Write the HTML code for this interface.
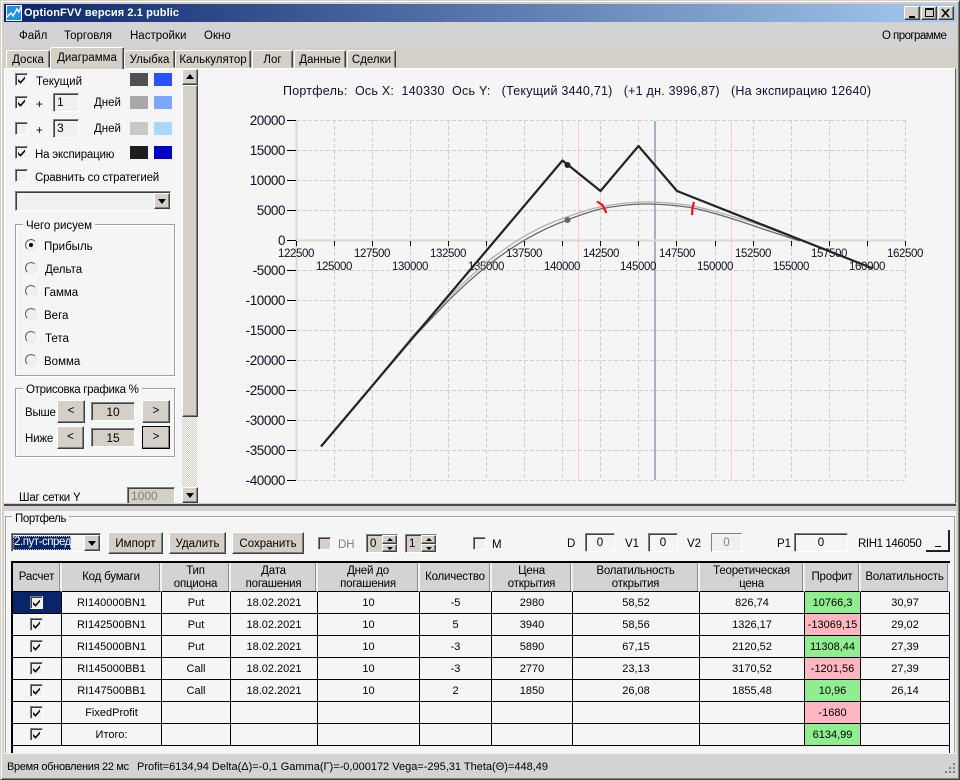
<!DOCTYPE html>
<html><head><meta charset="utf-8"><style>
html,body{margin:0;padding:0;width:960px;height:780px;overflow:hidden;background:#d4d0c8}
body{position:relative;font:11.5px/13px "Liberation Sans",sans-serif;color:#000}
.a{position:absolute;box-sizing:border-box}
.t{position:absolute;white-space:nowrap;line-height:13px}
.up{position:absolute;box-sizing:border-box;background:#d4d0c8;border:1px solid;border-color:#fff #404040 #404040 #fff;box-shadow:inset -1px -1px #808080;text-align:center}
.dn{position:absolute;box-sizing:border-box;border:1px solid;border-color:#808080 #fff #fff #808080;box-shadow:inset 1px 1px #404040;text-align:center}
.cb{position:absolute;box-sizing:border-box;width:13px;height:13px;background:#f0f0f0;border:1px solid;border-color:#808080 #fff #fff #808080;box-shadow:inset 1px 1px #404040}
.cb svg{position:absolute;left:0;top:0}
.tab{position:absolute;box-sizing:border-box;top:50px;height:18px;background:#d4d0c8;border:1px solid;border-color:#fff #404040 transparent #fff;border-radius:2px 2px 0 0;text-align:center;padding-top:3px;box-shadow:inset -1px 0 #808080}
.sw{position:absolute;width:18px;height:13px}
.rd{position:absolute;box-sizing:border-box;left:25px;width:12px;height:12px;border-radius:50%;background:#f0f0f0;border:1px solid;border-color:#606060 #e8e8e8 #e8e8e8 #606060}
.grp{position:absolute;box-sizing:border-box;border:1px solid #a0a0a0;box-shadow:1px 1px #fff,inset 1px 1px #fff}
.lg{position:absolute;background:#f5f5f5;padding:0 3px;white-space:nowrap;line-height:13px}
.ar{position:absolute;width:0;height:0;border-left:4px solid transparent;border-right:4px solid transparent}
table{position:absolute;left:13px;top:563px;border-collapse:separate;border-spacing:0;table-layout:fixed;width:937px;font:11px/13px "Liberation Sans",sans-serif}
th{font-weight:normal;font-size:11.5px;letter-spacing:-.2px;background:#d3d3d3;height:29px;box-sizing:border-box;padding:1px 0 0;border-right:2px solid #f2f2f2;border-bottom:1px solid #000;box-shadow:inset -1px 0 #909090;text-align:center}
td{height:22px;box-sizing:border-box;padding:1px 0 0;border-right:1px solid #000;border-bottom:1px solid #000;text-align:center;background:#f5f5f5;position:relative}
td .cb{left:17px;top:4px}
.g{background:#90ee90}.p{background:#ffb6c1}
</style></head><body>
<svg width="0" height="0" style="position:absolute"><defs><path id="ck" d="M2 5 L4.5 7.5 L9 2.5 L9 4.8 L4.5 9.8 L2 7.3Z" fill="#000"/></defs></svg>

<!-- window frame -->
<div class="a" style="left:0;top:0;width:960px;height:780px;border:1px solid;border-color:#d4d0c8 #404040 #404040 #d4d0c8;box-shadow:inset 1px 1px #fff,inset -1px -1px #808080"></div>
<div class="a" style="left:4px;top:4px;width:952px;height:18px;background:linear-gradient(90deg,#0a246a,#a6caf0)"></div>
<svg class="a" style="left:6px;top:5px" width="16" height="16"><rect width="16" height="16" fill="#fff"/><rect x="1" y="1" width="14" height="14" fill="#1e90e8"/><path d="M1 12 L5 8 L7 11 L11 4 L13 7 L15 2" stroke="#fff" stroke-width="1.4" fill="none"/></svg>
<div class="t" style="left:24px;top:7px;color:#fff;font-weight:bold;font-size:11px;letter-spacing:.1px">OptionFVV версия 2.1 public</div>
<div class="up" style="left:904px;top:6px;width:16px;height:14px"><div class="a" style="left:4px;top:9px;width:6px;height:2px;background:#000"></div></div>
<div class="up" style="left:921px;top:6px;width:16px;height:14px"><div class="a" style="left:3px;top:1px;width:9px;height:9px;border:1px solid #000;border-top-width:2px"></div></div>
<div class="up" style="left:938px;top:6px;width:16px;height:14px"><svg class="a" style="left:2px;top:1px" width="10" height="10"><path d="M1 1 L8 9 M8 1 L1 9" stroke="#000" stroke-width="1.6"/></svg></div>

<!-- menu -->
<div class="a" style="left:4px;top:22px;width:952px;height:25px;background:#d3d3d3"></div>
<div class="t" style="left:19px;top:30px">Файл</div>
<div class="t" style="left:64px;top:30px">Торговля</div>
<div class="t" style="left:130px;top:30px">Настройки</div>
<div class="t" style="left:204px;top:30px">Окно</div>
<div class="t" style="left:882px;top:30px;letter-spacing:-.55px">О программе</div>

<!-- tabs -->
<div class="tab" style="left:6px;width:44px">Доска</div>
<div class="tab" style="left:124px;width:51px">Улыбка</div>
<div class="tab" style="left:175px;width:76px">Калькулятор</div>
<div class="tab" style="left:252px;width:41px">Лог</div>
<div class="tab" style="left:294px;width:52px">Данные</div>
<div class="tab" style="left:347px;width:49px">Сделки</div>

<!-- main panel -->
<div class="a" style="left:4px;top:68px;width:952px;height:437px;background:#f5f5f5;border-top:1px solid #fff;border-left:1px solid #fff;border-right:1px solid #606060"></div>
<div class="tab" style="left:50px;top:47px;width:74px;height:22px;border-bottom:0;padding-top:4px;z-index:2">Диаграмма</div>

<!-- sidebar -->
<div class="cb" style="left:15px;top:73px"><svg width="11" height="11"><use href="#ck"/></svg></div>
<div class="t" style="left:36px;top:76px">Текущий</div>
<div class="sw" style="left:130px;top:73px;background:#505050"></div>
<div class="sw" style="left:154px;top:73px;background:#2a50ff"></div>

<div class="cb" style="left:15px;top:96px"><svg width="11" height="11"><use href="#ck"/></svg></div>
<div class="t" style="left:36px;top:99px">+</div>
<div class="dn" style="left:53px;top:93px;width:26px;height:19px;background:#f0f0f0;text-align:left;padding:2px 0 0 3px;font-size:12px">1</div>
<div class="t" style="left:94px;top:97px">Дней</div>
<div class="sw" style="left:130px;top:96px;background:#a8a8a8"></div>
<div class="sw" style="left:154px;top:96px;background:#7ba7ff"></div>

<div class="cb" style="left:15px;top:122px"></div>
<div class="t" style="left:36px;top:125px">+</div>
<div class="dn" style="left:53px;top:119px;width:26px;height:19px;background:#f0f0f0;text-align:left;padding:2px 0 0 3px;font-size:12px">3</div>
<div class="t" style="left:94px;top:123px">Дней</div>
<div class="sw" style="left:130px;top:122px;background:#c8c8c8"></div>
<div class="sw" style="left:154px;top:122px;background:#a8d8ff"></div>

<div class="cb" style="left:15px;top:146px"><svg width="11" height="11"><use href="#ck"/></svg></div>
<div class="t" style="left:35px;top:149px;letter-spacing:-.2px">На экспирацию</div>
<div class="sw" style="left:130px;top:146px;background:#1e1e1e"></div>
<div class="sw" style="left:154px;top:146px;background:#0000c8"></div>

<div class="cb" style="left:15px;top:169px"></div>
<div class="t" style="left:35px;top:172px;letter-spacing:-.2px">Сравнить со стратегией</div>

<div class="dn" style="left:15px;top:191px;width:156px;height:20px;background:#f0f0f0"></div>
<div class="up" style="left:154px;top:193px;width:16px;height:16px"><div class="ar" style="left:3px;top:5px;border-top:5px solid #000"></div></div>

<div class="grp" style="left:15px;top:224px;width:160px;height:152px"></div>
<div class="lg" style="left:23px;top:220px">Чего рисуем</div>
<div class="rd" style="top:239px"><div class="a" style="left:3px;top:3px;width:4px;height:4px;border-radius:50%;background:#000"></div></div>
<div class="t" style="left:44px;top:241px">Прибыль</div>
<div class="rd" style="top:262px"></div><div class="t" style="left:45px;top:264px">Дельта</div>
<div class="rd" style="top:285px"></div><div class="t" style="left:44px;top:287px">Гамма</div>
<div class="rd" style="top:308px"></div><div class="t" style="left:44px;top:310px">Вега</div>
<div class="rd" style="top:331px"></div><div class="t" style="left:45px;top:333px">Тета</div>
<div class="rd" style="top:354px"></div><div class="t" style="left:44px;top:356px">Вомма</div>

<div class="grp" style="left:15px;top:388px;width:160px;height:69px"></div>
<div class="lg" style="left:23px;top:384px;letter-spacing:-.3px">Отрисовка графика %</div>
<div class="t" style="left:25px;top:407px;letter-spacing:-.2px">Выше</div>
<div class="up" style="left:57px;top:400px;width:28px;height:23px;padding-top:4px">&lt;</div>
<div class="dn" style="left:91px;top:402px;width:44px;height:19px;background:#d4d0c8;padding-top:3px;font-size:12px">10</div>
<div class="up" style="left:142px;top:400px;width:28px;height:23px;padding-top:4px">&gt;</div>
<div class="t" style="left:25px;top:433px;letter-spacing:-.2px">Ниже</div>
<div class="up" style="left:57px;top:426px;width:27px;height:23px;padding-top:4px">&lt;</div>
<div class="dn" style="left:91px;top:428px;width:44px;height:19px;background:#d4d0c8;padding-top:3px;font-size:12px">15</div>
<div class="up" style="left:142px;top:426px;width:28px;height:23px;padding-top:4px;outline:1px solid #000;outline-offset:-1px">&gt;</div>

<div class="t" style="left:19px;top:492px;letter-spacing:-.2px">Шаг сетки Y</div>
<div class="dn" style="left:127px;top:487px;width:48px;height:17px;background:#d4d0c8;color:#808080;text-align:left;padding:2px 0 0 3px;font-size:12px;border-bottom:0">1000</div>

<!-- sidebar scrollbar -->
<div class="a" style="left:182px;top:416px;width:15px;height:71px;background:repeating-conic-gradient(#d4d0c8 0 25%,#f5f5f5 0 50%) 0 0/2px 2px"></div>
<div class="up" style="left:182px;top:69px;width:16px;height:16px"><div class="ar" style="left:3px;top:4px;border-bottom:5px solid #000"></div></div>
<div class="up" style="left:182px;top:85px;width:16px;height:332px"></div>
<div class="up" style="left:182px;top:487px;width:16px;height:16px"><div class="ar" style="left:3px;top:5px;border-top:5px solid #000"></div></div>

<!-- chart -->
<svg class="a" style="left:198px;top:69px;background:#f5f5f5" width="757" height="435" viewBox="198 69 757 435" font-family="Liberation Sans, sans-serif">
<text x="283" y="95" font-size="12.5" fill="#101030" textLength="588" lengthAdjust="spacing" xml:space="preserve">Портфель:  Ось X:  140330  Ось Y:   (Текущий 3440,71)   (+1 дн. 3996,87)   (На экспирацию 12640)</text>
<g stroke="#cecece" stroke-dasharray="4 2" fill="none">
<path d="M296 120.5H905M296 150.5H905M296 180.5H905M296 210.5H905M296 270.5H905M296 300.5H905M296 330.5H905M296 360.5H905M296 390.5H905M296 420.5H905M296 450.5H905M296 480.5H905"/>
<path d="M334.5 120V480M372.5 120V480M410.5 120V480M448.5 120V480M486.5 120V480M524.5 120V480M562.5 120V480M600.5 120V480M638.5 120V480M676.5 120V480M715.5 120V480M753.5 120V480M791.5 120V480M829.5 120V480M867.5 120V480M905.5 120V480"/>
</g>
<path d="M578.5 121V480M731.5 121V480" stroke="#ffc8d0"/>
<path d="M655 121V480" stroke="#a4b0c4" stroke-width="2"/>
<path d="M296.5 120V481" stroke="#d8d8d8" stroke-width="2"/>
<path d="M296 240.5H905" stroke="#d8d8d8" stroke-width="2"/>
<g stroke="#000">
<path d="M287 120.5H296M287 150.5H296M287 180.5H296M287 210.5H296M287 240.5H296M287 270.5H296M287 300.5H296M287 330.5H296M287 360.5H296M287 390.5H296M287 420.5H296M287 450.5H296M287 480.5H296"/>
<path d="M296.5 241V246M334.5 241V246M372.5 241V246M410.5 241V246M448.5 241V246M486.5 241V246M524.5 241V246M562.5 241V246M600.5 241V246M638.5 241V246M676.5 241V246M715.5 241V246M753.5 241V246M791.5 241V246M829.5 241V246M867.5 241V246M905.5 241V246"/>
</g>
<g font-size="13.5" letter-spacing="-.45" text-anchor="end" fill="#101020">
<text x="285" y="125">20000</text><text x="285" y="155">15000</text><text x="285" y="185">10000</text><text x="285" y="215">5000</text><text x="285" y="245">0</text><text x="285" y="275">-5000</text><text x="285" y="305">-10000</text><text x="285" y="335">-15000</text><text x="285" y="365">-20000</text><text x="285" y="395">-25000</text><text x="285" y="425">-30000</text><text x="285" y="455">-35000</text><text x="285" y="485">-40000</text>
</g>
<g font-size="11.5" letter-spacing="-.4" text-anchor="middle" fill="#101020">
<text x="296" y="257">122500</text><text x="372" y="257">127500</text><text x="448" y="257">132500</text><text x="524" y="257">137500</text><text x="601" y="257">142500</text><text x="677" y="257">147500</text><text x="753" y="257">152500</text><text x="829" y="257">157500</text><text x="905" y="257">162500</text>
<text x="334" y="270">125000</text><text x="410" y="270">130000</text><text x="486" y="270">135000</text><text x="562" y="270">140000</text><text x="638" y="270">145000</text><text x="715" y="270">150000</text><text x="791" y="270">155000</text><text x="867" y="270">160000</text>
</g>
<g fill="none" stroke-linejoin="round">
<path d="M370 388 L410 339 L448 298 Q467 279 487 262 Q505 248 523 237 Q545 224 567 217 Q585 210 600 207 Q625 202 645 202 Q670 202 693 206 Q720 212 760 225 L800 240" stroke="#b0b0b0" stroke-width="1.3"/>
<path d="M370 388 L410 341 L448 301 Q467 282 487 266 Q505 252 523 241 Q545 228 567 220 Q585 213 600 209 Q625 204 645 204 Q670 204 693 208 Q720 214 760 228 L800 241" stroke="#666" stroke-width="1.3"/>
<path d="M321 446.5 L562.5 160.5 L600.5 191 L638.5 146 L677 191 L873 268.5" stroke="#222" stroke-width="2.2"/>
</g>
<circle cx="567.5" cy="165" r="3" fill="#222"/>
<circle cx="567.5" cy="220" r="3" fill="#666"/>
<path d="M597 201.5 L602.5 205 L606.5 213" stroke="#f01010" stroke-width="2.2" fill="none"/>
<path d="M694 202 L692.5 208 L692 215" stroke="#f01010" stroke-width="2.2" fill="none"/>
</svg>

<!-- splitter -->
<div class="a" style="left:4px;top:503px;width:952px;height:1px;background:#d4d0c8"></div>
<div class="a" style="left:4px;top:504px;width:952px;height:2px;background:#484848"></div>
<div class="a" style="left:4px;top:506px;width:952px;height:5px;background:#d3d3d3"></div>

<!-- bottom panel -->
<div class="a" style="left:4px;top:511px;width:952px;height:242px;background:#f5f5f5"></div>
<div class="a" style="left:5px;top:516px;width:950px;height:240px;border:1px solid #a0a0a0;border-bottom:0;box-shadow:inset 1px 1px #fff"></div>
<div class="lg" style="left:12px;top:513px;letter-spacing:-.4px">Портфель</div>

<div class="dn" style="left:11px;top:533px;width:90px;height:19px;background:#f5f5f5"></div>
<div class="a" style="left:13px;top:536px;width:58px;height:14px;background:#0a246a;color:#fff;padding-left:1px;white-space:nowrap;letter-spacing:-.45px;outline:1px dotted #c0c0c0;outline-offset:-1px">2.пут-спред</div>
<div class="up" style="left:84px;top:535px;width:16px;height:16px"><div class="ar" style="left:3px;top:5px;border-top:5px solid #000"></div></div>

<div class="up" style="left:108px;top:532px;width:55px;height:22px;padding-top:5px">Импорт</div>
<div class="up" style="left:169px;top:532px;width:57px;height:22px;padding-top:5px">Удалить</div>
<div class="up" style="left:232px;top:532px;width:72px;height:22px;padding-top:5px">Сохранить</div>

<div class="cb" style="left:318px;top:537px;background:#d4d0c8"></div>
<div class="t" style="left:338px;top:539px;color:#808080">DH</div>
<div class="dn" style="left:366px;top:534px;width:32px;height:19px;background:#d4d0c8;text-align:left;padding:3px 0 0 3px">0</div>
<div class="up" style="left:382px;top:535px;width:15px;height:9px"><div class="ar" style="left:4px;top:2px;border-left-width:3px;border-right-width:3px;border-bottom:3px solid #000"></div></div>
<div class="up" style="left:382px;top:544px;width:15px;height:8px"><div class="ar" style="left:4px;top:2px;border-left-width:3px;border-right-width:3px;border-top:3px solid #000"></div></div>
<div class="dn" style="left:405px;top:534px;width:32px;height:19px;background:#d4d0c8;text-align:left;padding:3px 0 0 3px">1</div>
<div class="up" style="left:421px;top:535px;width:15px;height:9px"><div class="ar" style="left:4px;top:2px;border-left-width:3px;border-right-width:3px;border-bottom:3px solid #000"></div></div>
<div class="up" style="left:421px;top:544px;width:15px;height:8px"><div class="ar" style="left:4px;top:2px;border-left-width:3px;border-right-width:3px;border-top:3px solid #000"></div></div>
<div class="cb" style="left:473px;top:537px"></div>
<div class="t" style="left:492px;top:539px">M</div>
<div class="t" style="left:567px;top:538px">D</div>
<div class="dn" style="left:585px;top:533px;width:30px;height:19px;background:#f5f5f5;padding-top:3px">0</div>
<div class="t" style="left:625px;top:538px">V1</div>
<div class="dn" style="left:648px;top:533px;width:30px;height:19px;background:#f5f5f5;padding-top:3px">0</div>
<div class="t" style="left:687px;top:538px">V2</div>
<div class="dn" style="left:711px;top:533px;width:31px;height:19px;background:#f0f0f0;padding-top:3px;color:#808080;box-shadow:none">0</div>
<div class="t" style="left:777px;top:538px">P1</div>
<div class="dn" style="left:794px;top:533px;width:54px;height:19px;background:#f5f5f5;padding-top:3px">0</div>
<div class="t" style="left:858px;top:538px;letter-spacing:-.4px">RIH1 146050</div>
<div class="a" style="left:926px;top:530px;width:24px;height:22px;background:#f5f5f5;border-right:2px solid #202020;border-bottom:2px solid #202020"></div>
<div class="a" style="left:935px;top:546px;width:6px;height:1px;background:#000"></div>

<!-- grid -->
<div class="a" style="left:11px;top:561px;width:939px;height:192px;border:2px solid #000;border-left-width:2px;border-right-width:1px;border-bottom:0"></div>
<table><colgroup><col style="width:49px"><col style="width:100px"><col style="width:69px"><col style="width:87px"><col style="width:102px"><col style="width:72px"><col style="width:81px"><col style="width:127px"><col style="width:105px"><col style="width:56px"><col style="width:89px"></colgroup>
<tr><th>Расчет</th><th>Код бумаги</th><th>Тип<br>опциона</th><th>Дата<br>погашения</th><th>Дней до<br>погашения</th><th>Количество</th><th>Цена<br>открытия</th><th>Волатильность<br>открытия</th><th>Теоретическая<br>цена</th><th>Профит</th><th>Волатильность</th></tr>
<tr><td style="background:#0a246a"><div class="cb"><svg width="11" height="11"><use href="#ck"/></svg></div></td><td>RI140000BN1</td><td>Put</td><td>18.02.2021</td><td>10</td><td>-5</td><td>2980</td><td>58,52</td><td>826,74</td><td class="g">10766,3</td><td>30,97</td></tr>
<tr><td><div class="cb"><svg width="11" height="11"><use href="#ck"/></svg></div></td><td>RI142500BN1</td><td>Put</td><td>18.02.2021</td><td>10</td><td>5</td><td>3940</td><td>58,56</td><td>1326,17</td><td class="p">-13069,15</td><td>29,02</td></tr>
<tr><td><div class="cb"><svg width="11" height="11"><use href="#ck"/></svg></div></td><td>RI145000BN1</td><td>Put</td><td>18.02.2021</td><td>10</td><td>-3</td><td>5890</td><td>67,15</td><td>2120,52</td><td class="g">11308,44</td><td>27,39</td></tr>
<tr><td><div class="cb"><svg width="11" height="11"><use href="#ck"/></svg></div></td><td>RI145000BB1</td><td>Call</td><td>18.02.2021</td><td>10</td><td>-3</td><td>2770</td><td>23,13</td><td>3170,52</td><td class="p">-1201,56</td><td>27,39</td></tr>
<tr><td><div class="cb"><svg width="11" height="11"><use href="#ck"/></svg></div></td><td>RI147500BB1</td><td>Call</td><td>18.02.2021</td><td>10</td><td>2</td><td>1850</td><td>26,08</td><td>1855,48</td><td class="g">10,96</td><td>26,14</td></tr>
<tr><td><div class="cb"><svg width="11" height="11"><use href="#ck"/></svg></div></td><td>FixedProfit</td><td></td><td></td><td></td><td></td><td></td><td></td><td></td><td class="p">-1680</td><td></td></tr>
<tr><td><div class="cb"><svg width="11" height="11"><use href="#ck"/></svg></div></td><td>Итого:</td><td></td><td></td><td></td><td></td><td></td><td></td><td></td><td class="g">6134,99</td><td></td></tr>
</table>

<!-- status bar -->
<div class="a" style="left:3px;top:753px;width:954px;height:25px;background:#d3d3d3;border-top:1px solid #f0f0f0"></div>
<div class="t" style="left:7px;top:761px;font-size:11px;letter-spacing:-.3px">Время обновления 22 мс</div>
<div class="t" style="left:137px;top:761px;font-size:11px">Profit=6134,94 Delta(Δ)=-0,1 Gamma(Γ)=-0,000172 Vega=-295,31 Theta(Θ)=448,49</div>
<svg class="a" style="left:942px;top:762px" width="13" height="13"><path d="M11 1h2v2h-2zM7 5h2v2H7zM11 5h2v2h-2zM3 9h2v2H3zM7 9h2v2H7zM11 9h2v2h-2z" fill="#808080"/></svg>
</body></html>
